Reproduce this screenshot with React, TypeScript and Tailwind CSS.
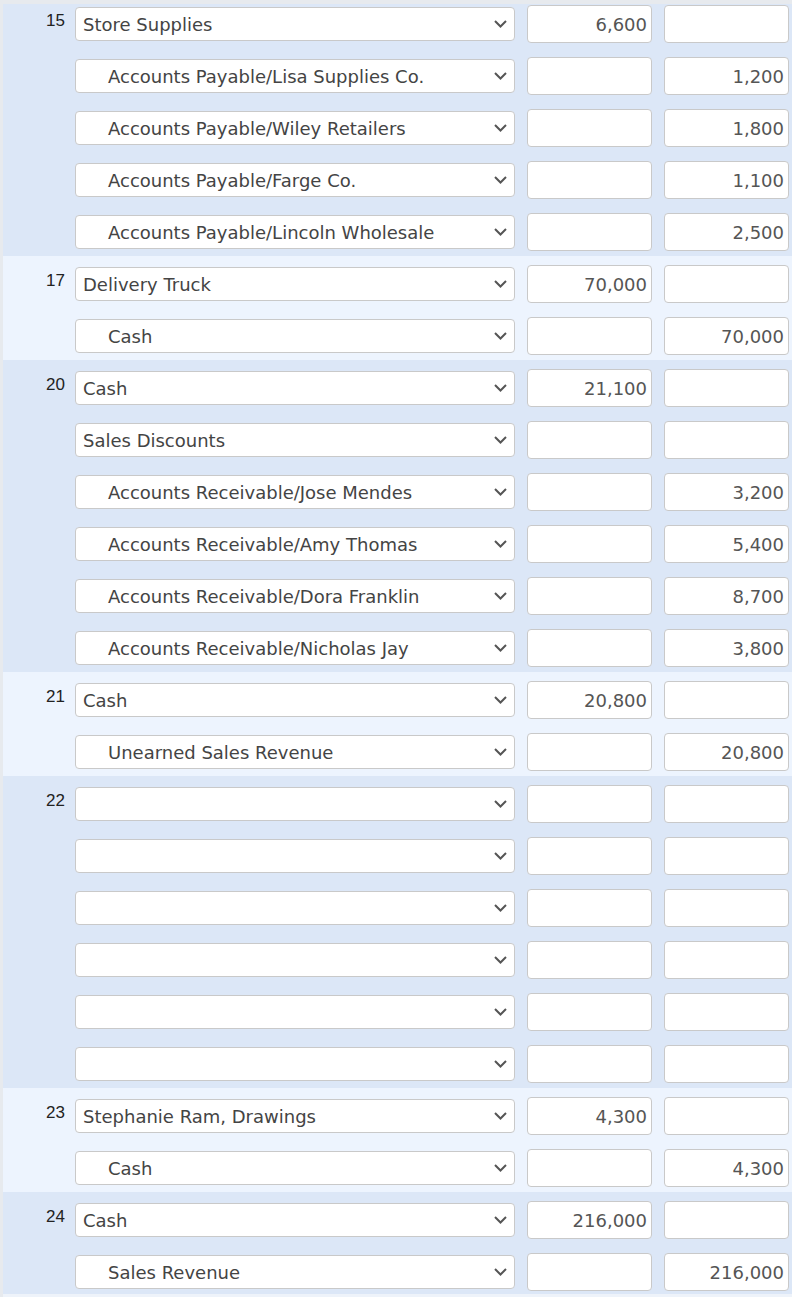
type Line = { account: string; indent?: boolean; debit?: string; credit?: string };
type Entry = { day: string; lines: Line[] };

const entries: Entry[] = [
  {
    day: "15",
    lines: [
      { account: "Store Supplies", debit: "6,600" },
      { account: "Accounts Payable/Lisa Supplies Co.", indent: true, credit: "1,200" },
      { account: "Accounts Payable/Wiley Retailers", indent: true, credit: "1,800" },
      { account: "Accounts Payable/Farge Co.", indent: true, credit: "1,100" },
      { account: "Accounts Payable/Lincoln Wholesale", indent: true, credit: "2,500" },
    ],
  },
  {
    day: "17",
    lines: [
      { account: "Delivery Truck", debit: "70,000" },
      { account: "Cash", indent: true, credit: "70,000" },
    ],
  },
  {
    day: "20",
    lines: [
      { account: "Cash", debit: "21,100" },
      { account: "Sales Discounts" },
      { account: "Accounts Receivable/Jose Mendes", indent: true, credit: "3,200" },
      { account: "Accounts Receivable/Amy Thomas", indent: true, credit: "5,400" },
      { account: "Accounts Receivable/Dora Franklin", indent: true, credit: "8,700" },
      { account: "Accounts Receivable/Nicholas Jay", indent: true, credit: "3,800" },
    ],
  },
  {
    day: "21",
    lines: [
      { account: "Cash", debit: "20,800" },
      { account: "Unearned Sales Revenue", indent: true, credit: "20,800" },
    ],
  },
  {
    day: "22",
    lines: [
      { account: "" },
      { account: "" },
      { account: "" },
      { account: "" },
      { account: "" },
      { account: "" },
    ],
  },
  {
    day: "23",
    lines: [
      { account: "Stephanie Ram, Drawings", debit: "4,300" },
      { account: "Cash", indent: true, credit: "4,300" },
    ],
  },
  {
    day: "24",
    lines: [
      { account: "Cash", debit: "216,000" },
      { account: "Sales Revenue", indent: true, credit: "216,000" },
    ],
  },
];

function Chevron() {
  return (
    <svg width="13" height="8" viewBox="0 0 13 8" className="shrink-0">
      <polyline points="1,1 6.5,6.5 12,1" fill="none" stroke="#555" strokeWidth="2" />
    </svg>
  );
}

function AmountBox({ value }: { value?: string }) {
  return (
    <div className="flex h-[38px] w-[125px] shrink-0 items-center justify-end rounded-[4px] border border-[#c9c9c9] bg-white pr-[4px] pt-[1px] text-[#555]">
      {value}
    </div>
  );
}

function Row({ day, line, last }: { day?: string; line: Line; last?: boolean }) {
  return (
    <div className={`flex items-start pt-[9px] ${last ? "pb-[3px]" : "pb-[5px]"}`}>
      <div className="w-[62px] shrink-0 pt-[6px] text-right font-['Liberation_Sans',sans-serif] text-[17px] leading-[20px] text-[#222]">
        {day}
      </div>
      <div
        className={`ml-[10px] mt-[2px] flex h-[34px] w-[440px] shrink-0 items-center justify-between rounded-[4px] border border-[#c9c9c9] bg-white pr-[7px] text-[#444] ${
          line.indent ? "pl-[32px]" : "pl-[7px]"
        }`}
      >
        <span className="whitespace-nowrap">{line.account}</span>
        <Chevron />
      </div>
      <div className="ml-[12px]">
        <AmountBox value={line.debit} />
      </div>
      <div className="ml-[12px]">
        <AmountBox value={line.credit} />
      </div>
    </div>
  );
}

export default function App() {
  return (
    <div className="h-[1297px] w-[792px] overflow-hidden bg-[#e7eaee] pl-[3px] pt-[4px] font-['DejaVu_Sans',Verdana,sans-serif] text-[18px]">
      <div className="h-full overflow-hidden bg-[#eef3fa]">
        <div className="-mt-[8px]">
          {entries.map((e, i) => (
            <div key={e.day} className={i % 2 === 0 ? "bg-[#dce7f7]" : "bg-[#edf4fe]"}>
              {e.lines.map((l, j) => (
                <Row
                  key={j}
                  day={j === 0 ? e.day : undefined}
                  line={l}
                  last={i === entries.length - 1 && j === e.lines.length - 1}
                />
              ))}
            </div>
          ))}
        </div>
      </div>
    </div>
  );
}
